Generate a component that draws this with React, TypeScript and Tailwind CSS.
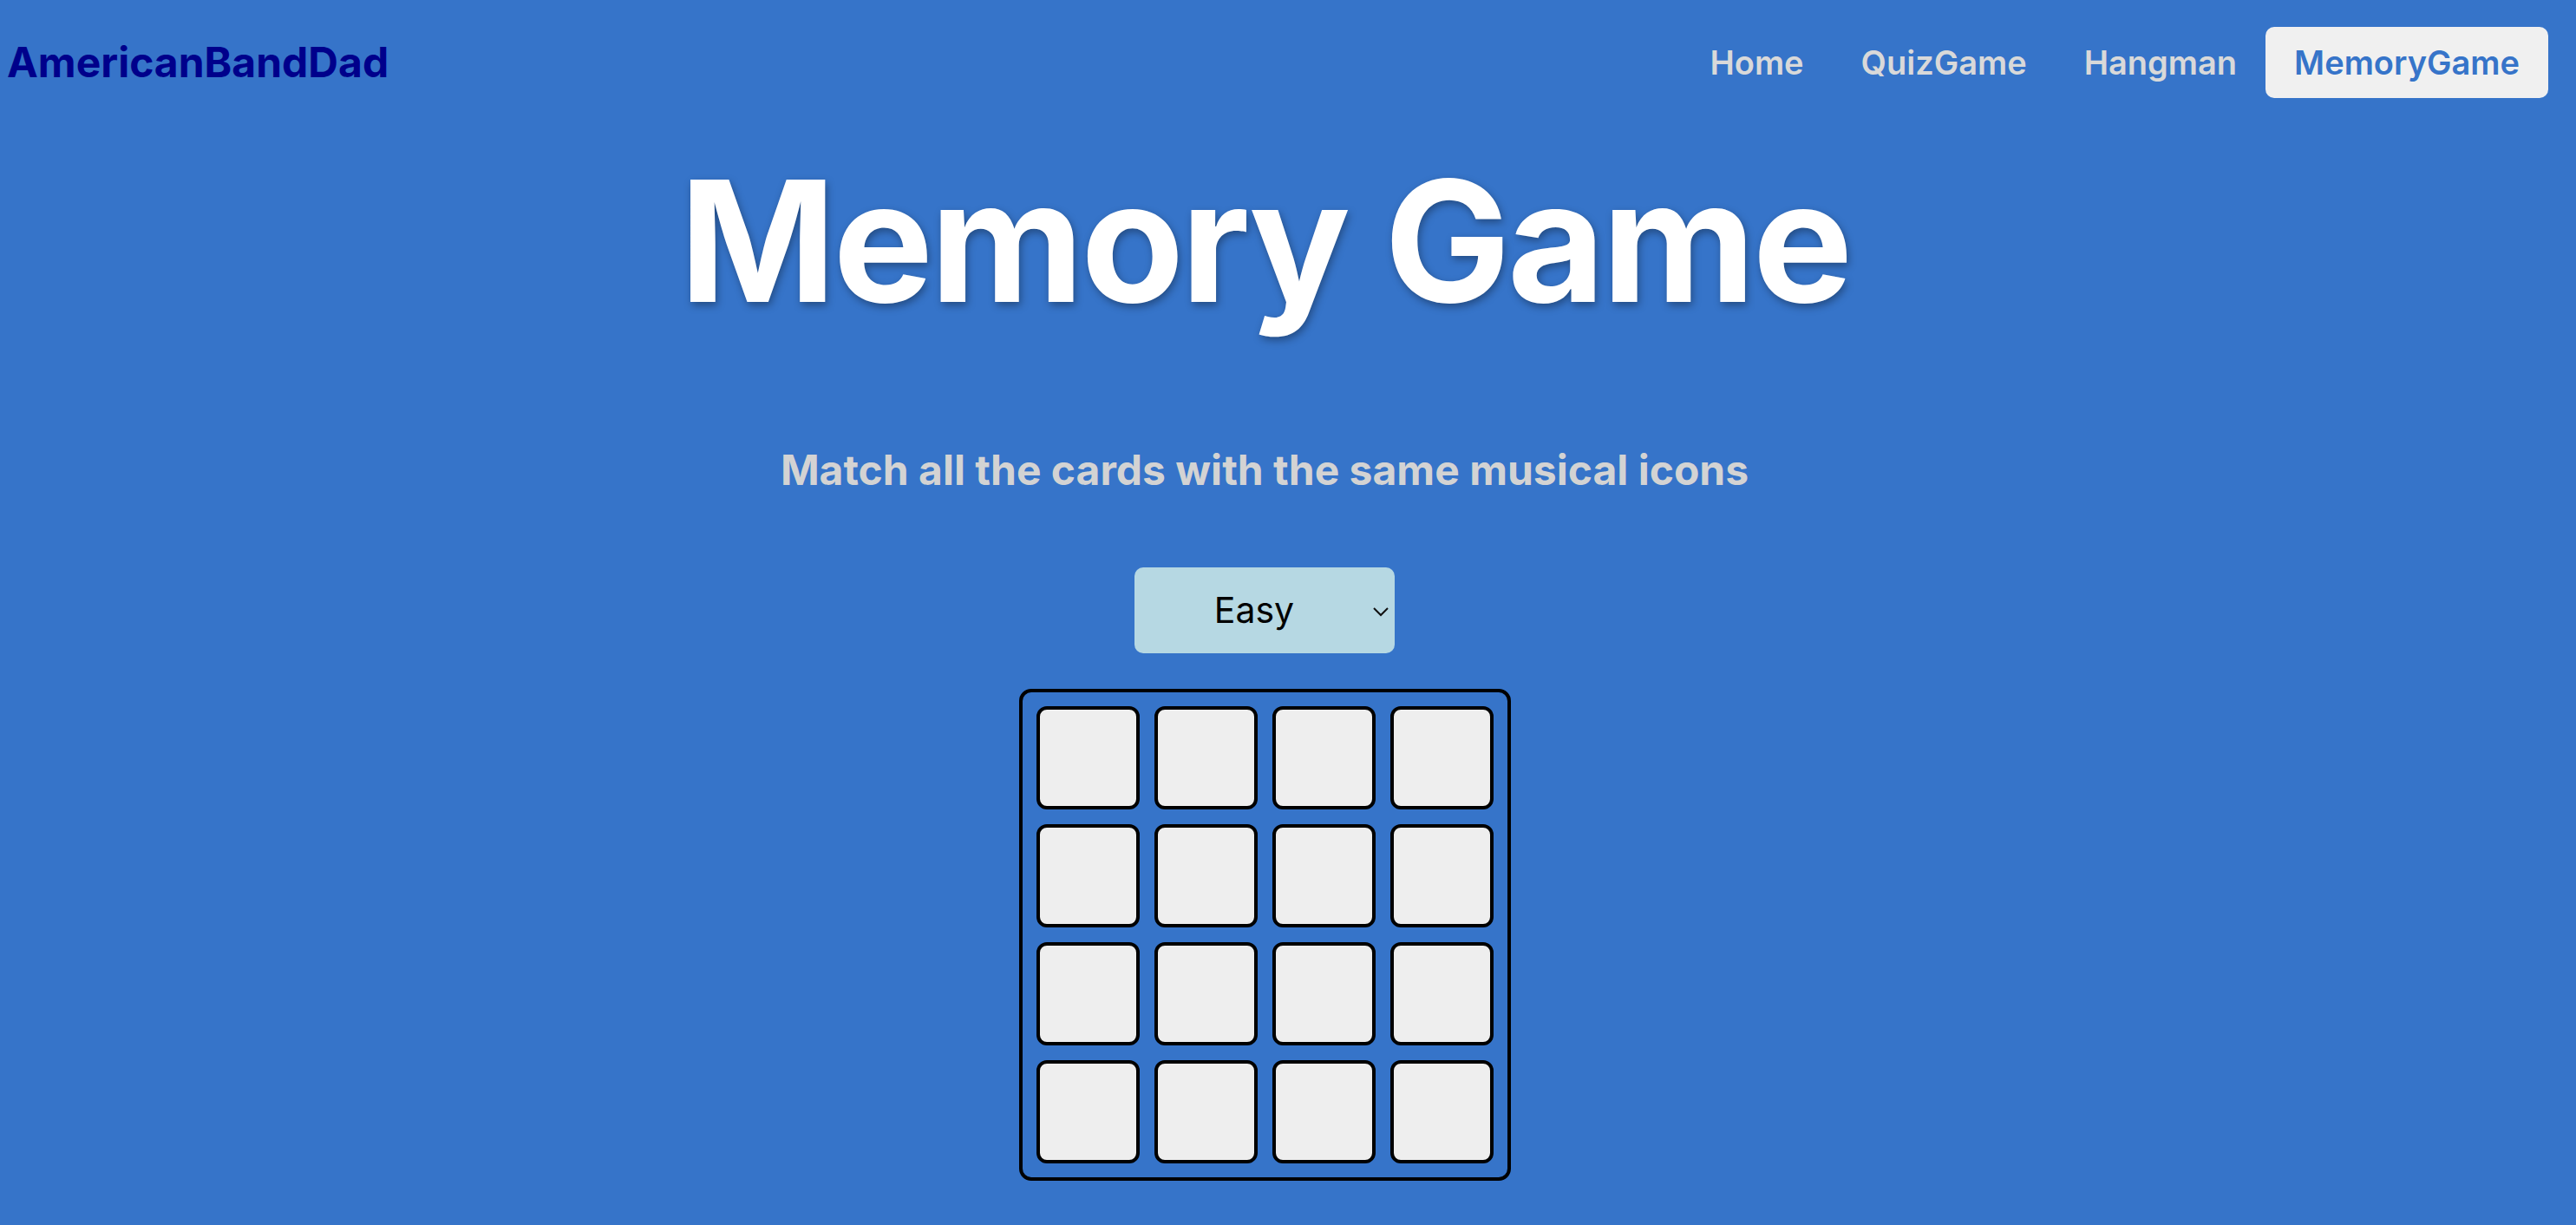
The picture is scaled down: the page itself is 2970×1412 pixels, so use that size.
import { useState } from "react";

const links = ["Home", "QuizGame", "Hangman", "MemoryGame"];

function Card() {
  return (
    <button className="w-[119px] h-[119px] bg-[#eeeeee] border-4 border-black rounded-[12px]" />
  );
}

export default function App() {
  const [level, setLevel] = useState("Easy");
  const cards = Array.from({ length: 16 }, (_, i) => i);

  return (
    <div
      className="min-h-screen bg-[#3674c9]"
      style={{ fontFamily: "Inter, 'Noto Sans', sans-serif" }}
    >
      {/* top bar */}
      <nav className="h-[144px] flex items-center justify-between pl-[8px] pr-[32px]">
        <div className="text-[#00008b] text-[48px] font-bold leading-none">
          AmericanBandDad
        </div>
        <div className="flex items-center">
          {links.map((l) => (
            <a
              key={l}
              className={
                l === "MemoryGame"
                  ? "h-[82px] flex items-center px-[33px] rounded-[10px] bg-[#f0f0f0] text-[#3674c9] text-[38px] font-semibold"
                  : "h-[82px] flex items-center px-[33px] text-[#d9d9d9] text-[38px] font-semibold"
              }
            >
              {l}
            </a>
          ))}
        </div>
      </nav>

      <main className="flex flex-col items-center pr-[54px]">
        <h1 className="mt-[37px] text-white text-[194px] font-bold leading-none tracking-[-3.5px] [text-shadow:2px_4px_10px_rgba(0,0,0,0.35)]">
          Memory Game
        </h1>

        <p className="mt-[143px] text-[#d3d3d3] text-[48px] font-bold leading-none">
          Match all the cards with the same musical icons
        </p>

        <div className="relative mt-[88px]">
          <select
            value={level}
            onChange={(e) => setLevel(e.target.value)}
            className="appearance-none w-[300px] h-[99px] bg-[#b6d8e3] rounded-[10px] text-black text-[41px] text-center pr-[24px] outline-none"
          >
            <option>Easy</option>
            <option>Medium</option>
            <option>Hard</option>
          </select>
          <svg
            className="absolute right-[6px] top-[45px] pointer-events-none"
            width="20"
            height="12"
            viewBox="0 0 20 12"
            fill="none"
            stroke="#111"
            strokeWidth="2"
          >
            <path d="M2 2 L10 10 L18 2" />
          </svg>
        </div>

        <div className="mt-[41px] border-4 border-black rounded-[14px] p-4 grid grid-cols-4 gap-[17px]">
          {cards.map((c) => (
            <Card key={c} />
          ))}
        </div>
      </main>
    </div>
  );
}
